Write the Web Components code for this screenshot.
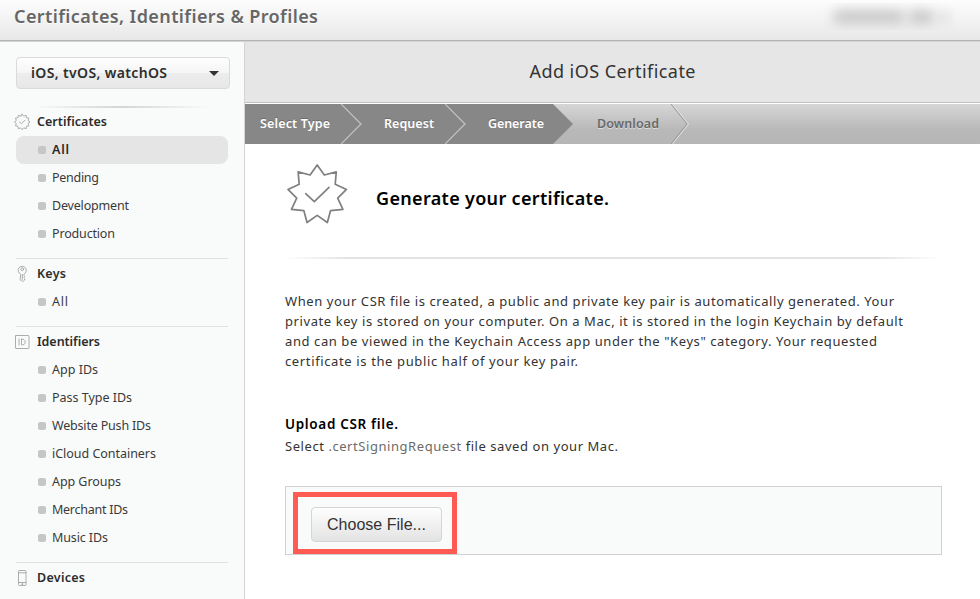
<!DOCTYPE html>
<html lang="en">
<head>
<meta charset="utf-8">
<title>Certificates, Identifiers &amp; Profiles</title>
<style>
html,body{margin:0;height:100%;overflow:hidden}
body{font-family:"Noto Sans","Open Sans",sans-serif;font-size:13px;color:#333;background:#fff}
</style>
</head>
<body>
<portal-app></portal-app>
<script>
const define=(name,html,setup)=>customElements.define(name,class extends HTMLElement{
  connectedCallback(){
    if(this.shadowRoot)return;
    const t=document.createElement('template');t.innerHTML=html;
    this.attachShadow({mode:'open'}).append(t.content.cloneNode(true));
    if(setup)setup(this,this.shadowRoot);
  }
});

/* One line of text, tracked so that it fills the width given in its "w" attribute. */
define('text-run','<style>:host{display:block;white-space:nowrap;flex:none}span{display:inline-block;font-variant-ligatures:none}</style><span><slot></slot></span>',(el,root)=>{
  const w=+el.getAttribute('w'),s=root.querySelector('span');
  const n=el.textContent.length,natural=s.getBoundingClientRect().width;
  if(w)s.style.letterSpacing=((w-natural)/(n-1)).toFixed(3)+'px';
  if(w)el.style.width=w+'px';
});

const star=(n,R,r,cx,cy)=>Array.from({length:n*2},(_,i)=>{
  const q=i%2?r:R,a=i/(n*2)*Math.PI*2-Math.PI/2;
  return (cx+q*Math.cos(a)).toFixed(2)+','+(cy+q*Math.sin(a)).toFixed(2);
}).join(' ');
const icons={
  seal:`<svg width="64" height="64" viewBox="0 0 64 64"><polygon points="${star(9,29.7,20.8,32.2,32.6)}"/><path d="M20.7 31.7l8.6 8L44 25.3"/></svg>`,
  cert:`<svg width="16" height="16" viewBox="0 0 16 16"><polygon points="${star(12,7.8,6,8.2,8)}"/><path d="M5.2 7.8l2.3 2L11 6.2"/></svg>`,
  keys:'<svg width="16" height="16" viewBox="0 0 16 16"><path d="M6.4 8.1A4.1 4.1 0 1 1 10 8.1V9.7L10.7 10.6L10 11.6L10.7 12.6V14L8.6 15.5L6.4 14Z"/><circle cx="8.2" cy="3.2" r="1.4"/><path d="M8.3 8.5v5"/></svg>',
  id:'<svg width="16" height="16" viewBox="0 0 16 16"><rect x="1.5" y="1.5" width="13.5" height="13" rx=".5"/><path d="M5 5v6M7.5 5.2v5.6h1.1c3.6 0 3.6-5.6 0-5.6z"/></svg>',
  device:'<svg width="16" height="16" viewBox="0 0 16 16"><rect x="4.5" y=".5" width="7.5" height="15" rx="1"/><path d="M4.5 2.8h7.5M4.5 12.5h7.5"/><circle cx="8.2" cy="14.1" r=".5"/></svg>'
};
define('line-icon','<style>:host{display:block;flex:none}svg{display:block;overflow:visible;fill:none;stroke:currentColor;stroke-width:var(--stroke,.9);stroke-linecap:round;stroke-linejoin:round}</style>',(el,root)=>{
  const t=document.createElement('template');t.innerHTML=icons[el.getAttribute('name')];
  root.append(t.content);
});

define('top-bar',`<style>
:host{display:flex;justify-content:space-between;box-sizing:border-box;height:42px;padding:0 25px 0 14px;background:linear-gradient(#fdfdfd,#e8e8e8 40px);border-bottom:1px solid #d4d4d4;box-shadow:inset 0 -1px #b3b3b3}
text-run{font:600 18px/25px "Noto Sans";margin-top:4px;color:#666;text-shadow:0 1px #fff}
.user{width:136px;height:27px;margin-top:3px;overflow:hidden;display:flex;align-items:center}
.user b{height:14px;background:#c9c9c9;filter:blur(6px);border-radius:6px}
.user b:nth-child(1){width:72px;margin-left:14px}.user b:nth-child(2){width:26px;margin-left:3px}
.user b:nth-child(3){width:12px;height:8px;margin-left:4px;background:#d6d6d6}
</style><text-run w="304">Certificates, Identifiers &amp; Profiles</text-run><div class="user"><b></b><b></b><b></b></div>`);

define('platform-select',`<style>
:host{display:flex;align-items:center;justify-content:space-between;box-sizing:border-box;width:214px;height:32px;margin-left:16px;padding:0 10px 0 14px;border:1px solid #d9dad9;border-radius:4px;background:linear-gradient(#fefefe,#f5f5f5 49%,#ededed 50%,#e7e7e7);font:600 14px/20px "Noto Sans";color:#2d2d2d}
i{border:5px solid transparent;border-top:5px solid #333;border-bottom:0}
</style><text-run w="136">iOS, tvOS, watchOS</text-run><i></i>`);

define('nav-item',`<style>
:host{display:flex;align-items:center;gap:6px;height:28px;padding-left:22px;border-radius:8px;color:#3a3a3a;line-height:28px}
:host([selected]){background:#e5e5e5;font-weight:600;color:#2a2a2a}
i{width:8px;height:8px;border-radius:2px;background:#c6c6c6}
</style><i></i><slot></slot>`);

define('nav-group',`<style>
:host{display:block;margin:0 16px 10px;width:212px;font-size:12.5px}
:host([ruled]){border-top:1px solid #e0e2e1;padding-top:1px}
header{display:flex;align-items:center;gap:7px;height:28px;margin-left:-2px;font-weight:600;line-height:28px;color:#2c2c2c}
</style><header><slot name="icon"></slot><slot name="title"></slot></header><slot></slot>`);

const nav=[['cert','Certificates',70,[['All',17],['Pending',47],['Development',77],['Production',63]]],
['keys','Keys',29,[['All',16]]],
['id','Identifiers',63,[['App IDs',46],['Pass Type IDs',80],['Website Push IDs',99],['iCloud Containers',104],['App Groups',69],['Merchant IDs',76],['Music IDs',56]]],
['device','Devices',48,[]]];
define('side-bar',`<style>
:host{display:block;box-sizing:border-box;width:245px;flex:none;padding-top:15px;background:#f9fbfa;border-right:1px solid #d3d5d4}
.fade{height:2px;margin:17px 16px 0;width:212px;background:linear-gradient(90deg,transparent 8%,#d4d5d4 50%,transparent 92%)}
line-icon{color:#a3a3a3}
</style><platform-select></platform-select><div class="fade"></div>`+nav.map(([ic,t,w,items],g)=>`<nav-group${g?' ruled':''}><line-icon slot="icon" name="${ic}"></line-icon><text-run slot="title" w="${w}">${t}</text-run>${items.map(([x,v],i)=>`<nav-item${!g&&!i?' selected':''}><text-run w="${v}">${x}</text-run></nav-item>`).join('')}</nav-group>`).join(''));

define('step-item',`<style>
:host{display:flex;align-items:center;box-sizing:border-box;height:40px;position:relative;background:#878787;color:#fff;font-weight:600;font-size:12.5px;text-shadow:0 -1px #6b6b6b;z-index:1}
:host([upcoming]){background:none;color:#696969;text-shadow:0 1px #ddd;z-index:0}
slot{display:block;margin-top:-1px}
svg{position:absolute;left:100%;top:0;fill:none;stroke:#c4c4c4;stroke-width:1.2;z-index:1}
:host([last]) svg{fill:#878787;stroke:none}
:host([upcoming]) svg{stroke:#989898;stroke-width:1}
svg .hi{stroke:#e2e2e2}
:host(:not([upcoming])) .up,:host([upcoming]) .done{display:none}
</style><slot></slot><svg class="done" width="22" height="40"><path d="M0 0L20 20L0 40"/></svg><svg class="up" width="20" height="40"><path class="hi" d="M1.5 0L17.5 20L1.5 40"/><path d="M0 0L16 20L0 40"/></svg>`);
define('step-bar',`<style>
:host{display:flex;height:40px;background:linear-gradient(#d6d6d6,#c6c6c6 35%,#b8b8b8 65%,#b6b6b6)}
step-item:nth-of-type(1){width:96px;padding-left:15px;z-index:3}
step-item:nth-of-type(2){width:104px;padding-left:43px;z-index:2}
step-item:nth-of-type(3){width:108px;padding-left:43px}
step-item:nth-of-type(4){width:118px;padding-left:44px}
</style><step-item><text-run w="70">Select Type</text-run></step-item><step-item><text-run w="50">Request</text-run></step-item><step-item last><text-run w="56">Generate</text-run></step-item><step-item upcoming><text-run w="62">Download</text-run></step-item>`);

define('page-title',`<style>
:host{display:flex;justify-content:center;box-sizing:border-box;height:62px;padding-top:16px;background:#e6e6e6;border-bottom:1px solid #fff;box-shadow:inset 0 -1px #c2c2c2;font-size:18px;line-height:27px;color:#333}
</style><text-run w="166">Add iOS Certificate</text-run>`);

define('file-picker',`<style>
:host{display:block;box-sizing:border-box;width:657px;height:69px;border:1px solid #d0d2d1;background:#f9fbfa;padding:5px 7px}
.mark{box-sizing:border-box;width:164px;height:62px;border:5px solid #ff5b52;padding:10px 13px}
button{display:flex;align-items:center;justify-content:center;box-sizing:border-box;width:131px;height:35px;padding:0;border:1px solid #d4d5d4;border-radius:4px;background:linear-gradient(#fefefe,#e3e3e3);font:16px/20px "Liberation Sans",sans-serif;color:#333}
</style><div class="mark"><button><text-run w="99">Choose File...</text-run></button></div>`);

define('generate-panel',`<style>
:host{display:block;padding:18px 0 0 40px}
.head{display:flex;align-items:center;height:64px}
.head line-icon{color:#808080;--stroke:1.7}
h1{margin:7px 0 0 27px;font:600 18px/26px "Noto Sans";color:#000}
.rule{height:2px;width:657px;margin-top:31px;background:linear-gradient(90deg,transparent,#e2e2e2 10%,#e2e2e2 90%,transparent)}
.copy{margin-top:32px;line-height:20px}
.upload{margin-top:42px;line-height:22px}
h2{margin:0;font:600 13.5px/22px "Noto Sans";color:#000}
em{font-style:normal;color:#6b6b6b}
file-picker{margin-top:29px}
</style><div class="head"><line-icon name="seal"></line-icon><h1><text-run w="233">Generate your certificate.</text-run></h1></div><div class="rule"></div>
<div class="copy"><text-run w="609">When your CSR file is created, a public and private key pair is automatically generated. Your</text-run><text-run w="618">private key is stored on your computer. On a Mac, it is stored in the login Keychain by default</text-run><text-run w="592">and can be viewed in the Keychain Access app under the "Keys" category. Your requested</text-run><text-run w="293">certificate is the public half of your key pair.</text-run></div>
<div class="upload"><h2><text-run w="113">Upload CSR file.</text-run></h2><text-run w="333">Select <em>.certSigningRequest</em> file saved on your Mac.</text-run></div>
<file-picker></file-picker>`);

define('portal-app',`<style>
:host{display:flex;flex-direction:column;width:980px;height:599px;overflow:hidden}
.body{display:flex;flex:1;min-height:0}
main{flex:1;min-width:0}
</style><top-bar></top-bar><div class="body"><side-bar></side-bar><main><page-title></page-title><step-bar></step-bar><generate-panel></generate-panel></main></div>`);
</script>
</body>
</html>
